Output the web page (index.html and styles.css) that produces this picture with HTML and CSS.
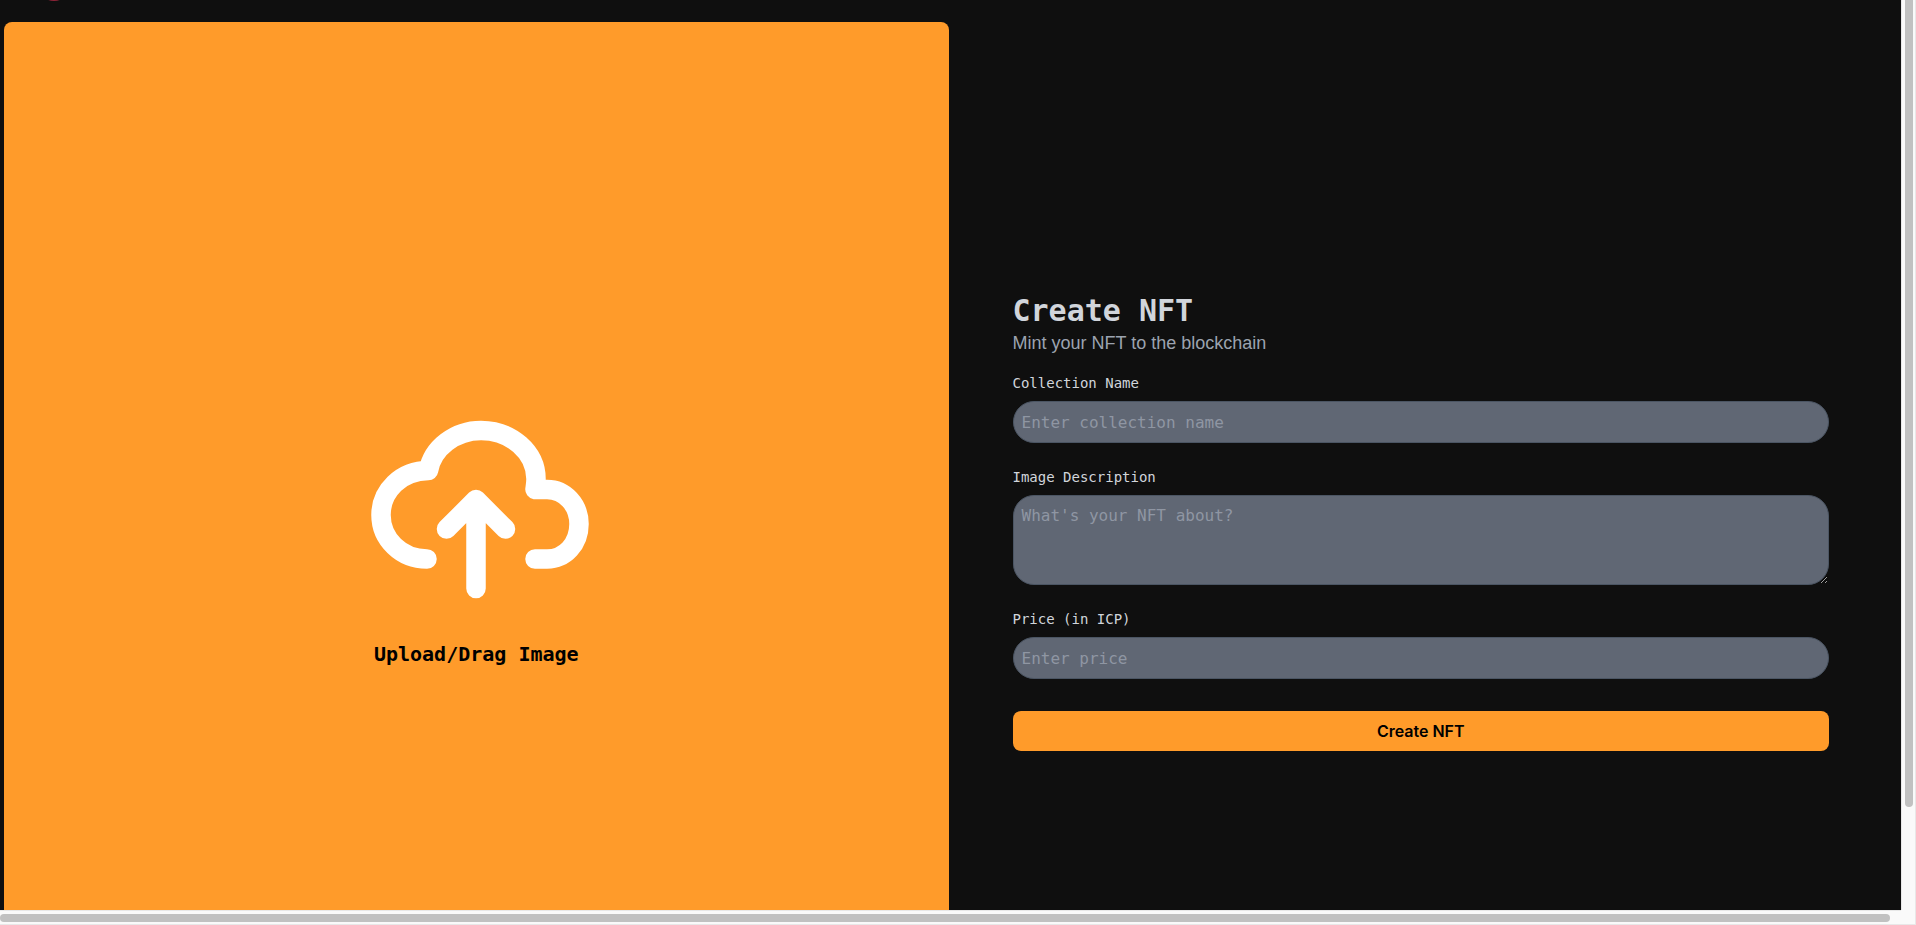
FILE: index.html
```html
<!DOCTYPE html>
<html lang="en">
<head>
<meta charset="utf-8">
<title>Create NFT</title>
<link rel="stylesheet" href="styles.css">
</head>
<body>
<div class="window">
  <div class="viewport">
    <header class="header">
      <svg class="logo" viewBox="0 0 16 2" aria-hidden="true"><ellipse cx="8" cy="-2" rx="8" ry="3" fill="#8f2438"/></svg>
    </header>
    <main class="create">
      <button class="dropzone" type="button">
        <svg class="cloud" viewBox="0 0 240 240" aria-hidden="true">
          <path d="M71 183C45 183 25 163 25 139C25 115 45 94.500 72.500 94.500C76.500 72 99 54.500 125 54.500C155 54.500 180 76 180 103C180 107 179.500 110 179 113.500H191C209 113.500 223 129 223 148C223 168 209 183 191 183H179"/>
          <path d="M120 212.500V123.500M90.500 153L120 123.500L149.500 153"/>
        </svg>
        <span>Upload/Drag Image</span>
      </button>
      <form class="form">
        <h1 class="title">Create NFT</h1>
        <p class="subtitle">Mint your NFT to the blockchain</p>
        <div class="field">
          <label for="collection">Collection Name</label>
          <input id="collection" type="text" placeholder="Enter collection name">
        </div>
        <div class="field">
          <label for="description">Image Description</label>
          <textarea id="description" rows="3" placeholder="What's your NFT about?"></textarea>
        </div>
        <div class="field">
          <label for="price">Price (in ICP)</label>
          <input id="price" type="text" placeholder="Enter price">
        </div>
        <button class="submit" type="button">Create NFT</button>
      </form>
    </main>
  </div>
  <div class="track track-y"><div class="thumb thumb-y"></div></div>
  <div class="track track-x"><div class="thumb thumb-x"></div></div>
  <div class="corner"></div>
</div>
</body>
</html>
```
FILE: styles.css
```css
* {
  box-sizing: border-box;
}

body {
  margin: 0;
  font-family: "DejaVu Sans Mono", monospace;
  background: #0f0f0f;
}

.window {
  display: grid;
  grid-template: minmax(0, 1fr) 15px / minmax(0, 1fr) 15px;
  height: 100vh;
}

.viewport {
  overflow: hidden;
  background: #0f0f0f;
}

.header {
  height: 22px;
  padding-left: 46px;
}

.logo {
  display: block;
  width: 16px;
  height: 2px;
}

.create {
  display: grid;
  grid-template-columns: 1fr 1fr;
  align-items: center;
  gap: 4px;
  padding: 0 4px;
}

.dropzone {
  display: flex;
  flex-direction: column;
  align-items: center;
  justify-content: center;
  gap: 24px;
  min-height: 1000px;
  border: 0;
  border-radius: 8px;
  background: #ff9b2a;
  color: #000;
  font: bold 20px/28px "DejaVu Sans Mono", monospace;
}

.cloud {
  width: 240px;
  height: 240px;
  fill: none;
  stroke: #fff;
  stroke-width: 19.500;
  stroke-linecap: round;
  stroke-linejoin: round;
}

.form {
  display: flex;
  flex-direction: column;
  padding: 0 68px 0 60px;
}

.title {
  margin: 0;
  font-size: 30px;
  line-height: 36px;
  color: #d1d5db;
}

.subtitle {
  margin: 0 0 16px;
  font: 18px/28px "Liberation Sans", Arial, sans-serif;
  color: #9ca3af;
}

.field {
  display: flex;
  flex-direction: column;
  gap: 8px;
  margin-bottom: 24px;
}

.field label {
  font-size: 14px;
  line-height: 20px;
  color: #d1d5db;
}

.field input,
.field textarea {
  width: 100%;
  margin: 0;
  padding: 8px;
  border: 1px solid #4b5563;
  border-radius: 21px;
  background: #606774;
  color: #fff;
  font: 16px/24px "DejaVu Sans Mono", monospace;
}

.field input {
  height: 42px;
}

.field ::placeholder {
  color: #8f96a3;
}

.submit {
  height: 40px;
  margin-top: 8px;
  border: 0;
  border-radius: 8px;
  background: #ff9b2a;
  color: #000;
  font: 600 16px/24px Inter, sans-serif;
}

.track,
.corner {
  background: #fafafa;
}

.track-y {
  padding: 0 2px 0 3px;
  border-left: 1px solid #e8e8e8;
  border-right: 1px solid #e8e8e8;
}

.track-x {
  padding: 3px 0 2px;
  border-top: 1px solid #e8e8e8;
  border-bottom: 1px solid #e8e8e8;
}

.corner {
  border-right: 1px solid #e8e8e8;
  border-bottom: 1px solid #e8e8e8;
}

.thumb {
  background: #c1c1c1;
}

.thumb-y {
  width: 8px;
  height: 88.700%;
  border-radius: 0 0 4px 4px;
}

.thumb-x {
  width: 99.400%;
  height: 8px;
  border-radius: 4px;
}
```
